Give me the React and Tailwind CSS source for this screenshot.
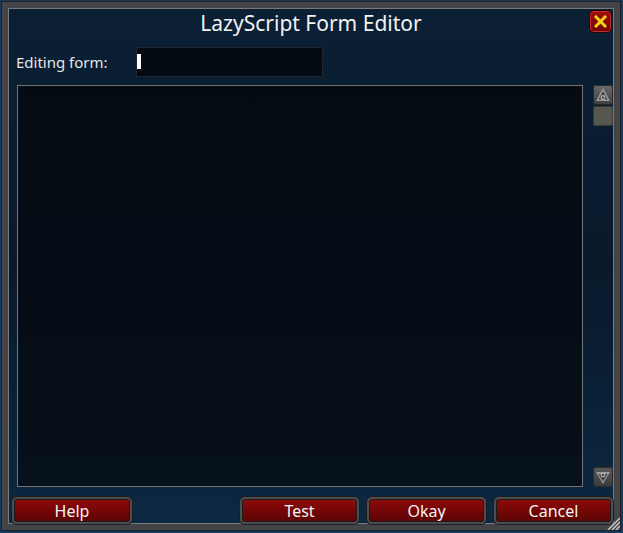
import React from 'react';

const font = { fontFamily: '"Noto Sans", "Open Sans", sans-serif' };

function RedButton({ children, className = '' }) {
    return (
        <button
            className={`h-[27px] rounded-[5px] border-[2px] border-[#4d4d4f] bg-gradient-to-b from-[#8e0c0c] via-[#750606] to-[#5a0404] text-[16px] leading-none text-[#f4f4f4] shadow-[inset_0_0_0_1px_#1c1c1c,0_0_0_1px_#1e1e1e] ${className}`}
            style={font}
        >
            {children}
        </button>
    );
}

function ScrollUp() {
    return (
        <div className="flex h-[20px] w-[20px] items-center justify-center rounded-[3px] bg-gradient-to-b from-[#6a6a6a] to-[#3e3e3e] shadow-[inset_0_0_0_1px_#2a2a2a]">
            <svg width="16" height="16" viewBox="0 0 16 16">
                <path d="M8 1 L15 14 L1 14 Z" fill="#9a9a9a" />
                <path d="M8 4 L12.5 12.5 L3.5 12.5 Z" fill="#3e3e3e" />
                <circle cx="8" cy="10.5" r="2.4" fill="#b0b0b0" />
                <circle cx="8" cy="10.5" r="1.1" fill="#2a2a2a" />
            </svg>
        </div>
    );
}

function ScrollDown() {
    return (
        <div className="flex h-[20px] w-[20px] items-center justify-center rounded-[3px] bg-gradient-to-b from-[#5a5a5a] to-[#3a3a3a] shadow-[inset_0_0_0_1px_#2a2a2a]">
            <svg width="16" height="16" viewBox="0 0 16 16">
                <path d="M1 3 L15 3 L8 15 Z" fill="#9a9a9a" />
                <path d="M3.5 5 L12.5 5 L8 12.5 Z" fill="#3e3e3e" />
                <circle cx="8" cy="6" r="2.4" fill="#b0b0b0" />
                <circle cx="8" cy="6" r="1.1" fill="#2a2a2a" />
            </svg>
        </div>
    );
}

export default function App() {
    return (
        <div className="h-[533px] w-[623px] overflow-hidden bg-[#16395b] pb-[3px] pl-[2px] pr-[3px] pt-[2px]">
            <div className="relative flex h-full flex-col border-[6px] border-[#434447] bg-gradient-to-b from-[#0b2035] via-[#08192b] to-[#0d2842] shadow-[inset_0_0_0_1px_#7a7a7a,0_0_0_1px_#222222]">
                {/* title */}
                <div className="h-[39px] pt-[2px] text-center text-[21px] leading-[26px] text-[#f2f2f2]" style={font}>
                    LazyScript Form Editor
                </div>
                <button className="absolute right-[2px] top-[2px] flex h-[23px] w-[23px] items-center justify-center rounded-[5px] border border-[#2a0505] bg-gradient-to-b from-[#a50d0d] to-[#6e0606] shadow-[inset_0_0_0_1px_#c42a2a]">
                    <svg width="13" height="13" viewBox="0 0 13 13">
                        <path d="M2 2 L11 11 M11 2 L2 11" stroke="#f2d21a" strokeWidth="3" strokeLinecap="square" />
                    </svg>
                </button>

                {/* editing form row */}
                <div className="flex h-[30px] items-center">
                    <span className="w-[128px] pl-[8px] text-[15px] text-[#e6e6e6]" style={font}>
                        Editing form:
                    </span>
                    <div className="flex h-[30px] w-[187px] items-center border border-[#1f262e] bg-[#040a11]">
                        <div className="h-[15px] w-[4px] bg-white" />
                    </div>
                </div>

                {/* main area */}
                <div className="mt-[8px] flex h-[403px]">
                    <div className="ml-[9px] h-full w-[566px] border border-[#747474] bg-gradient-to-b from-[#040b13] via-[#050c15] to-[#07111b]" />
                    <div className="ml-[10px] flex flex-col">
                        <ScrollUp />
                        <div className="mt-[1px] h-[20px] w-[20px] rounded-[3px] bg-[#56574f] shadow-[inset_0_0_0_1px_#3a3a36]" />
                        <div className="flex-1" />
                        <ScrollDown />
                    </div>
                </div>

                {/* buttons */}
                <div className="mt-[10px] flex">
                    <RedButton className="ml-[4px] w-[120px]">Help</RedButton>
                    <div className="flex-1" />
                    <div className="mr-[1px] flex gap-[8px]">
                        <RedButton className="w-[119px]">Test</RedButton>
                        <RedButton className="w-[119px]">Okay</RedButton>
                        <RedButton className="w-[119px]">Cancel</RedButton>
                    </div>
                </div>

                {/* resize grip */}
                <svg className="absolute bottom-[-6px] right-[-6px]" width="14" height="14" viewBox="0 0 14 14">
                    <path d="M2 14 L14 2 M6 14 L14 6 M10 14 L14 10" stroke="#c8c8c8" strokeWidth="1.5" />
                </svg>
            </div>
        </div>
    );
}
